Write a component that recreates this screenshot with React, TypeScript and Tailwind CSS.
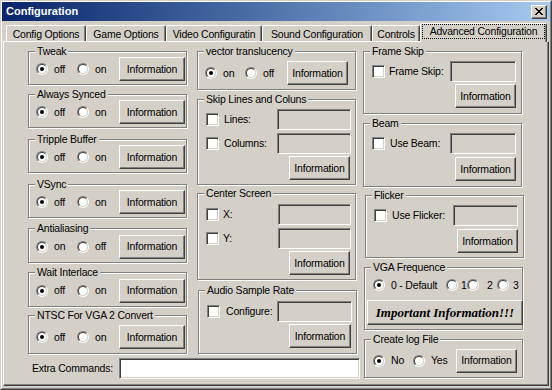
import React from 'react';

// Win2000 style "Configuration" dialog, Advanced Configuration tab

const sunken =
  'border border-t-[#808080] border-l-[#808080] border-r-white border-b-white shadow-[inset_1px_1px_0_#404040,inset_-1px_-1px_0_#d4d0c8]';

function Radio({ checked }: { checked?: boolean }) {
  return (
    <span className="flex h-[12px] w-[12px] shrink-0 rounded-full border border-t-[#808080] border-l-[#808080] border-r-white border-b-white">
      <span className="flex flex-1 items-center justify-center rounded-full border border-t-[#404040] border-l-[#404040] border-r-[#d4d0c8] border-b-[#d4d0c8] bg-white">
        {checked && <span className="h-[4px] w-[4px] rounded-full bg-black" />}
      </span>
    </span>
  );
}

function RadioOpt({
  label,
  checked,
  className = '',
  gap = 'ml-[6px]',
}: {
  label: string;
  checked?: boolean;
  className?: string;
  gap?: string;
}) {
  return (
    <div className={`flex shrink-0 items-center ${className}`}>
      <Radio checked={checked} />
      <span className={`whitespace-nowrap ${gap}`}>{label}</span>
    </div>
  );
}

function Check() {
  return <span className={`h-[13px] w-[13px] shrink-0 bg-white ${sunken}`} />;
}

function Field({ className = '', white }: { className?: string; white?: boolean }) {
  return (
    <input
      type="text"
      readOnly
      className={`h-[21px] shrink-0 outline-none ${sunken} ${white ? 'bg-white' : 'bg-[#d4d0c8]'} ${className}`}
    />
  );
}

function Btn({ children, className = '' }: { children: React.ReactNode; className?: string }) {
  return (
    <button
      type="button"
      className={`flex shrink-0 items-center justify-center whitespace-nowrap border border-t-white border-l-white border-r-[#404040] border-b-[#404040] bg-[#d4d0c8] text-black shadow-[inset_-1px_-1px_0_#808080] ${className}`}
    >
      {children}
    </button>
  );
}

function Group({
  title,
  className = '',
  children,
}: {
  title: string;
  className?: string;
  children: React.ReactNode;
}) {
  return (
    <div
      className={`relative w-[159px] shrink-0 border border-[#808080] shadow-[inset_1px_1px_0_#fff,1px_1px_0_#fff] ${className}`}
    >
      <span className="absolute left-[6px] top-[-7px] whitespace-nowrap bg-[#d4d0c8] px-[2px] leading-[13px]">
        {title}
      </span>
      {children}
    </div>
  );
}

function CheckRow({
  label,
  gap = 'ml-[5px]',
  inputClass,
  className = '',
}: {
  label: string;
  gap?: string;
  inputClass: string;
  className?: string;
}) {
  return (
    <div className={`flex h-[21px] items-center ${className}`}>
      <Check />
      <span className={`whitespace-nowrap ${gap}`}>{label}</span>
      <Field className={`ml-auto ${inputClass}`} />
    </div>
  );
}

const leftGroups = [
  { title: 'Tweak', a: 'off', b: 'on', cls: 'h-[34px]', pt: 'pt-[2px]' },
  { title: 'Always Synced', a: 'off', b: 'on', cls: 'mt-[9px] h-[34px]', pt: 'pt-[2px]' },
  { title: 'Tripple Buffer', a: 'off', b: 'on', cls: 'mt-[11px] h-[34px]', pt: 'pt-[2px]' },
  { title: 'VSync', a: 'off', b: 'on', cls: 'mt-[11px] h-[34px]', pt: 'pt-[2px]' },
  { title: 'Antialiasing', a: 'on', b: 'off', cls: 'mt-[10px] h-[35px]', pt: 'pt-[2px]' },
  { title: 'Wait Interlace', a: 'off', b: 'on', cls: 'mt-[9px] h-[35px]', pt: 'pt-[2px]' },
  { title: 'NTSC For VGA 2 Convert', a: 'off', b: 'on', cls: 'mt-[8px] h-[39px]', pt: 'pt-[5px]' },
];

const tabs = [
  { label: 'Config Options', w: 'w-[80px]' },
  { label: 'Game Options', w: 'w-[80px]' },
  { label: 'Video Configuratin', w: 'w-[96px]' },
  { label: 'Sound Configuration', w: 'w-[110px]' },
  { label: 'Controls', w: 'w-[48px]' },
];

const closeGlyph = [
  'XX....XX',
  '.XX..XX.',
  '..XXXX..',
  '...XX...',
  '..XXXX..',
  '.XX..XX.',
  'XX....XX',
];

function CloseIcon() {
  return (
    <svg width="8" height="7" viewBox="0 0 8 7" shapeRendering="crispEdges">
      {closeGlyph.map((row, y) =>
        row.split('').map((c, x) =>
          c === 'X' ? <rect key={`${x}-${y}`} x={x} y={y} width="1" height="1" fill="#000" /> : null,
        ),
      )}
    </svg>
  );
}

export default function App() {
  return (
    <div className="h-[390px] w-[552px] overflow-hidden border border-t-[#d4d0c8] border-l-[#d4d0c8] border-r-[#404040] border-b-[#404040] bg-[#d4d0c8] font-['Liberation_Sans',Arial,sans-serif] text-[10.5px] leading-[13px] tracking-[-0.2px] text-black">
      <div className="flex h-full flex-col border border-t-white border-l-white border-r-[#808080] border-b-[#808080]">
        {/* title bar */}
        <div className="flex h-[19px] shrink-0 items-center justify-between bg-linear-to-r from-[#0a246a] to-[#a6caf0] pl-[4px] pr-[3px]">
          <span className="text-[11px] font-bold tracking-normal text-white">Configuration</span>
          <Btn className="h-[14px] w-[16px]">
            <CloseIcon />
          </Btn>
        </div>

        <div className="flex flex-1 flex-col px-[1px] pb-[2px]">
          {/* tabs */}
          <div className="flex h-[20px] shrink-0 items-end pl-[3px]">
            {tabs.map((t) => (
              <div
                key={t.label}
                className={`flex h-[16px] items-center justify-center rounded-t-[2px] border-t border-l border-r border-t-white border-l-white border-r-[#404040] pt-[1px] shadow-[inset_-1px_0_0_#808080] ${t.w}`}
              >
                <span className="whitespace-nowrap">{t.label}</span>
              </div>
            ))}
            <div className="relative z-10 mb-[-1px] flex h-[19px] w-[127px] rounded-t-[2px] border-t border-l border-r border-t-white border-l-white border-r-[#404040] bg-[#d4d0c8] px-[1px] pb-[3px] shadow-[inset_-1px_0_0_#808080]">
              <span className="flex flex-1 items-center justify-center whitespace-nowrap border border-dotted border-black">
                Advanced Configuration
              </span>
            </div>
          </div>

          {/* tab page */}
          <div className="flex flex-1 border border-t-white border-l-white border-r-[#404040] border-b-[#404040] pl-[24px] pt-[9px] shadow-[inset_-1px_-1px_0_#808080]">
            {/* left + middle */}
            <div className="flex w-[329px] shrink-0 flex-col">
              <div className="flex">
                <div className="flex flex-col">
                  {leftGroups.map((g) => (
                    <Group key={g.title} title={g.title} className={g.cls}>
                      <div className={`flex h-full items-center pl-[7px] pr-[1px] ${g.pt}`}>
                        <RadioOpt label={g.a} checked className="w-[41px]" />
                        <RadioOpt label={g.b} className="w-[41px]" />
                        <Btn className="ml-auto h-[24px] w-[66px]">Information</Btn>
                      </div>
                    </Group>
                  ))}
                </div>

                <div className="ml-[10px] flex flex-col">
                  <Group title="vector translucency" className="h-[39px]">
                    <div className="flex h-full items-center pl-[7px] pr-[7px] pt-[5px]">
                      <RadioOpt label="on" checked className="w-[40px]" />
                      <RadioOpt label="off" className="w-[40px]" />
                      <Btn className="ml-auto h-[24px] w-[61px]">Information</Btn>
                    </div>
                  </Group>

                  <Group title="Skip Lines and Coluns" className="mt-[9px] h-[86px]">
                    <div className="flex flex-col pl-[8px] pr-[4px] pt-[9px]">
                      <CheckRow label="Lines:" inputClass="w-[74px]" />
                      <CheckRow label="Columns:" inputClass="w-[74px]" className="mt-[3px]" />
                      <div className="mt-[2px] flex justify-end pr-[1px]">
                        <Btn className="h-[24px] w-[61px]">Information</Btn>
                      </div>
                    </div>
                  </Group>

                  <Group title="Center Screen" className="mt-[8px] h-[87px]">
                    <div className="flex flex-col pl-[8px] pr-[4px] pt-[10px]">
                      <CheckRow label="X:" gap="ml-[4px]" inputClass="w-[73px]" />
                      <CheckRow label="Y:" gap="ml-[4px]" inputClass="w-[73px]" className="mt-[3px]" />
                      <div className="mt-[2px] flex justify-end pr-[1px]">
                        <Btn className="h-[24px] w-[61px]">Information</Btn>
                      </div>
                    </div>
                  </Group>

                  <Group title="Audio Sample Rate" className="ml-[1px] mt-[10px] h-[64px]">
                    <div className="flex flex-col pl-[8px] pr-[4px] pt-[10px]">
                      <CheckRow label="Configure:" gap="ml-[6px]" inputClass="w-[75px]" />
                      <div className="mt-[2px] flex justify-end pr-[1px]">
                        <Btn className="h-[24px] w-[62px]">Information</Btn>
                      </div>
                    </div>
                  </Group>
                </div>
              </div>

              {/* extra commands */}
              <div className="mt-[4px] flex items-center pl-[4px]">
                <span className="w-[87px] shrink-0 whitespace-nowrap">Extra Commands:</span>
                <Field white className="w-[241px]" />
              </div>
            </div>

            {/* right column */}
            <div className="ml-[6px] flex flex-col">
              <Group title="Frame Skip" className="h-[63px]">
                <div className="flex flex-col pl-[8px] pr-[5px] pt-[9px]">
                  <CheckRow label="Frame Skip:" gap="ml-[4px]" inputClass="w-[66px]" />
                  <div className="mt-[2px] flex justify-end">
                    <Btn className="h-[24px] w-[61px]">Information</Btn>
                  </div>
                </div>
              </Group>

              <Group title="Beam" className="mt-[9px] h-[64px]">
                <div className="flex flex-col pl-[8px] pr-[5px] pt-[9px]">
                  <CheckRow label="Use Beam:" gap="ml-[5px]" inputClass="w-[66px]" />
                  <div className="mt-[3px] flex justify-end">
                    <Btn className="h-[24px] w-[61px]">Information</Btn>
                  </div>
                </div>
              </Group>

              <Group title="Flicker" className="ml-[2px] mt-[8px] h-[63px]">
                <div className="flex flex-col pl-[8px] pr-[5px] pt-[9px]">
                  <CheckRow label="Use Flicker:" gap="ml-[5px]" inputClass="w-[65px]" />
                  <div className="mt-[3px] flex justify-end">
                    <Btn className="h-[24px] w-[61px]">Information</Btn>
                  </div>
                </div>
              </Group>

              <Group title="VGA Frequence" className="ml-[1px] mt-[9px] h-[63px]">
                <div className="flex flex-col pl-[2px] pt-[9px]">
                  <div className="flex h-[16px] items-center pl-[6px]">
                    <RadioOpt label="0 - Default" checked className="w-[73px]" />
                    <RadioOpt label="1" gap="ml-[3px]" className="w-[21px]" />
                    <RadioOpt label="2" gap="ml-[8px]" className="w-[30px]" />
                    <RadioOpt label="3" gap="ml-[4px]" />
                  </div>
                  <Btn className="mt-[7px] h-[25px] w-[156px] font-['Liberation_Serif','Times_New_Roman',serif] text-[13px] font-bold italic tracking-normal">
                    Important Information!!!
                  </Btn>
                </div>
              </Group>

              <Group title="Create log File" className="ml-[1px] mt-[9px] h-[39px]">
                <div className="flex h-full items-center pl-[8px] pr-[5px] pt-[4px]">
                  <RadioOpt label="No" checked className="w-[40px]" />
                  <RadioOpt label="Yes" className="w-[40px]" />
                  <Btn className="ml-auto h-[24px] w-[61px]">Information</Btn>
                </div>
              </Group>
            </div>
          </div>
        </div>
      </div>
    </div>
  );
}
